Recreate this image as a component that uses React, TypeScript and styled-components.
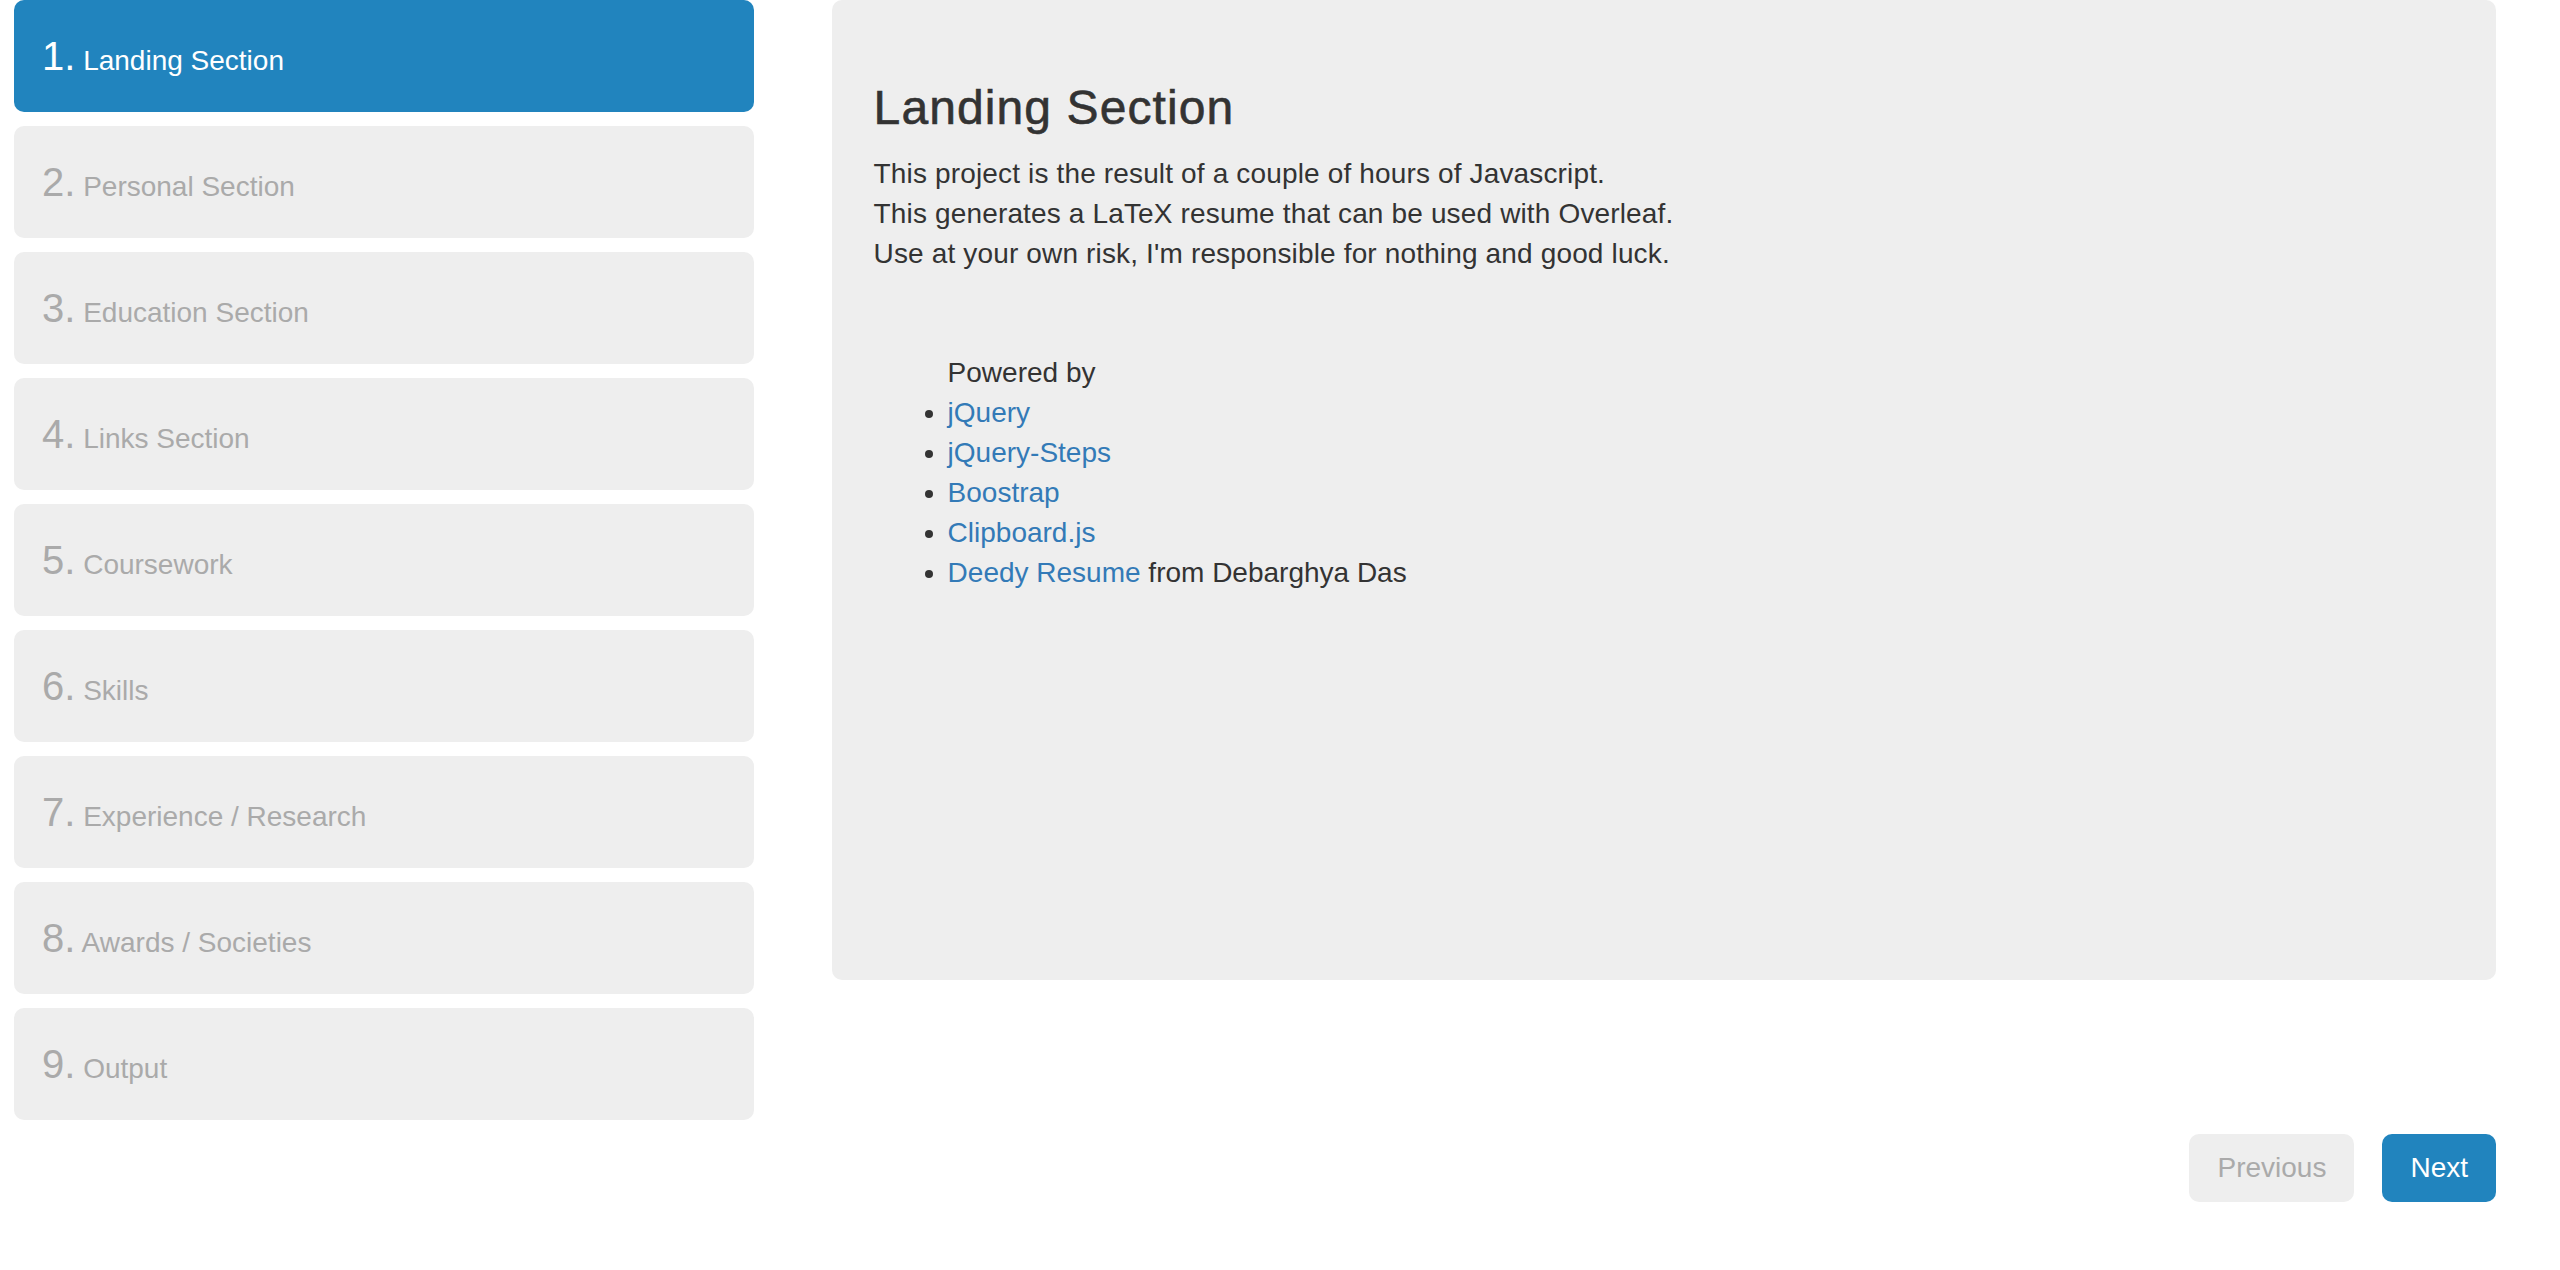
import React from "react";
import styled, { createGlobalStyle } from "styled-components";

const GlobalStyle = createGlobalStyle`
  html, body {
    margin: 0;
    padding: 0;
    background: #fff;
  }
  body {
    font-family: "Liberation Sans", Helvetica, Arial, sans-serif;
    font-size: 28px;
    line-height: 1.42857143;
    color: #333;
  }
  * { box-sizing: border-box; }
`;

const Wizard = styled.div`
  width: 2560px;
`;

const Top = styled.div`
  display: flex;
  align-items: flex-start;
`;

const Steps = styled.ul`
  list-style: none;
  margin: 0;
  padding: 0;
  width: 768px;
  flex: none;
`;

const Tab = styled.li<{ $current?: boolean }>`
  display: block;
  height: 112px;
  margin: 0 14px 14px;
  padding: 28px;
  border-radius: 10px;
  font-size: 28px;
  line-height: 40px;
  white-space: nowrap;
  overflow: hidden;
  background: ${(p) => (p.$current ? "#2184be" : "#eee")};
  color: ${(p) => (p.$current ? "#fff" : "#aaa")};
  cursor: ${(p) => (p.$current ? "default" : "pointer")};
`;

const Num = styled.span`
  font-size: 40px;
  line-height: 1.42857143;
`;

const Content = styled.section`
  flex: none;
  width: 1664px;
  min-height: 980px;
  margin: 0 0 14px 64px;
  padding: 41.6px;
  background: #eee;
  border-radius: 10px;
`;

const Heading = styled.h3`
  font-size: 48px;
  font-weight: 500;
  line-height: 1.1;
  letter-spacing: 1.1px;
  -webkit-text-stroke: 0.6px #333;
  margin: 40px 0 20px;
  color: #333;
`;

const Para = styled.p`
  margin: 0 0 20px;
  letter-spacing: 0.15px;
`;

const Credits = styled.ul`
  margin: 79px 0 0;
  padding-left: 74px;
`;

const Item = styled.li<{ $plain?: boolean }>`
  list-style: ${(p) => (p.$plain ? "none" : "disc")};
`;

const Link = styled.a`
  color: #337ab7;
  text-decoration: none;
`;

const Actions = styled.div`
  display: flex;
  justify-content: flex-end;
  gap: 28px;
  padding-right: 64px;
`;

const Button = styled.a<{ $disabled?: boolean }>`
  display: block;
  padding: 14px 28px;
  font-size: 28px;
  line-height: 40px;
  border-radius: 10px;
  text-decoration: none;
  background: ${(p) => (p.$disabled ? "#eee" : "#2184be")};
  color: ${(p) => (p.$disabled ? "#aaa" : "#fff")};
  cursor: ${(p) => (p.$disabled ? "default" : "pointer")};
`;

const steps = [
  "Landing Section",
  "Personal Section",
  "Education Section",
  "Links Section",
  "Coursework",
  "Skills",
  "Experience / Research",
  "Awards / Societies",
  "Output",
];

export default function App() {
  return (
    <>
      <GlobalStyle />
      <Wizard>
        <Top>
          <Steps>
            {steps.map((s, i) => (
              <Tab key={s} $current={i === 0}>
                <Num>{i + 1}.</Num> {s}
              </Tab>
            ))}
          </Steps>
          <Content>
            <Heading>Landing Section</Heading>
            <Para>
              This project is the result of a couple of hours of Javascript.
              <br />
              This generates a LaTeX resume that can be used with Overleaf.
              <br />
              Use at your own risk, I'm responsible for nothing and good luck.
            </Para>
            <Credits>
              <Item $plain>Powered by</Item>
              <Item>
                <Link href="#">jQuery</Link>
              </Item>
              <Item>
                <Link href="#">jQuery-Steps</Link>
              </Item>
              <Item>
                <Link href="#">Boostrap</Link>
              </Item>
              <Item>
                <Link href="#">Clipboard.js</Link>
              </Item>
              <Item>
                <Link href="#">Deedy Resume</Link> from Debarghya Das
              </Item>
            </Credits>
          </Content>
        </Top>
        <Actions>
          <Button $disabled>Previous</Button>
          <Button>Next</Button>
        </Actions>
      </Wizard>
    </>
  );
}
